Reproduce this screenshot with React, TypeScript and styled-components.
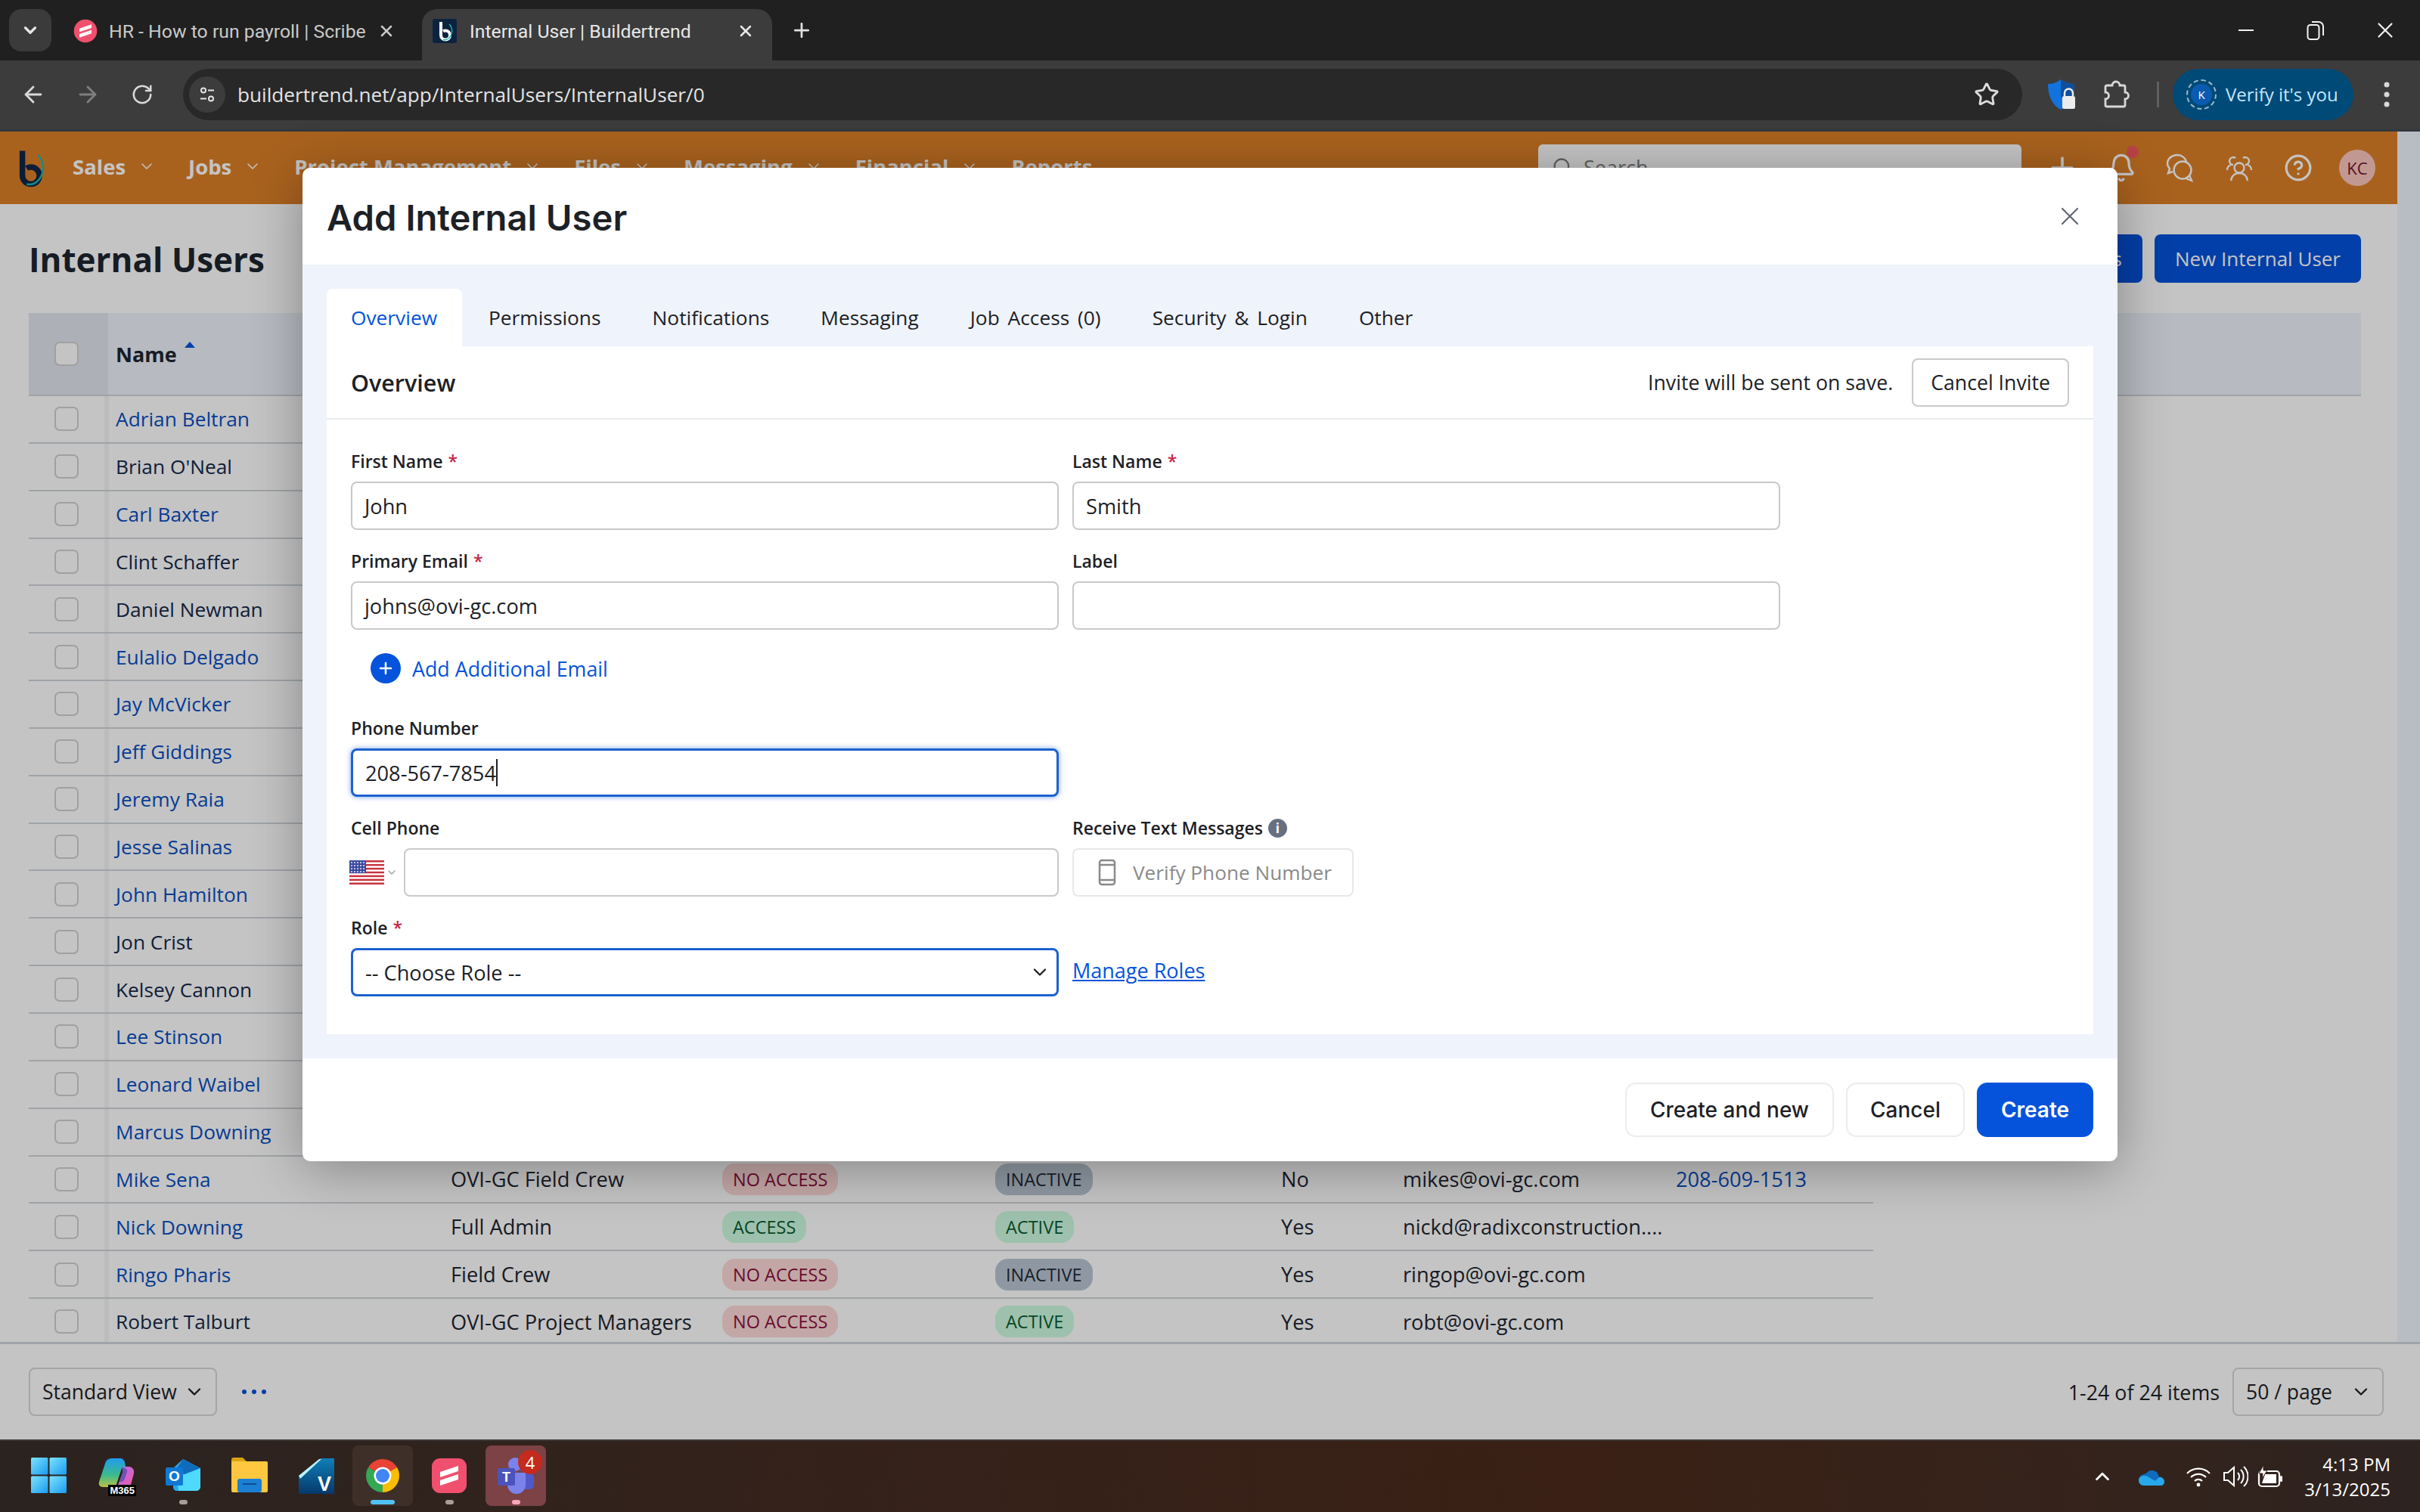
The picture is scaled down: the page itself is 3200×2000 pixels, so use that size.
import styled, { createGlobalStyle } from "styled-components";
import {
  ArrowLeft,
  ArrowRight,
  Bell,
  ChevronDown,
  ChevronUp,
  CircleHelp,
  Plus,
  RotateCw,
  Search,
  Star,
  X,
} from "lucide-react";

type UserRow = {
  name: string;
  plain?: boolean;
  role?: string;
  login?: "NO ACCESS" | "ACCESS";
  status?: "ACTIVE" | "INACTIVE";
  verified?: string;
  email?: string;
  phone?: string;
};

const users: UserRow[] = [
  { name: "Adrian Beltran" },
  { name: "Brian O'Neal", plain: true },
  { name: "Carl Baxter" },
  { name: "Clint Schaffer", plain: true },
  { name: "Daniel Newman", plain: true },
  { name: "Eulalio Delgado" },
  { name: "Jay McVicker" },
  { name: "Jeff Giddings" },
  { name: "Jeremy Raia" },
  { name: "Jesse Salinas" },
  { name: "John Hamilton" },
  { name: "Jon Crist", plain: true },
  { name: "Kelsey Cannon", plain: true },
  { name: "Lee Stinson" },
  { name: "Leonard Waibel" },
  { name: "Marcus Downing" },
  {
    name: "Mike Sena",
    role: "OVI-GC Field Crew",
    login: "NO ACCESS",
    status: "INACTIVE",
    verified: "No",
    email: "mikes@ovi-gc.com",
    phone: "208-609-1513",
  },
  {
    name: "Nick Downing",
    role: "Full Admin",
    login: "ACCESS",
    status: "ACTIVE",
    verified: "Yes",
    email: "nickd@radixconstruction....",
  },
  {
    name: "Ringo Pharis",
    role: "Field Crew",
    login: "NO ACCESS",
    status: "INACTIVE",
    verified: "Yes",
    email: "ringop@ovi-gc.com",
  },
  {
    name: "Robert Talburt",
    plain: true,
    role: "OVI-GC Project Managers",
    login: "NO ACCESS",
    status: "ACTIVE",
    verified: "Yes",
    email: "robt@ovi-gc.com",
  },
];

const navItems = ["Sales", "Jobs", "Project Management", "Files", "Messaging", "Financial"];
const modalTabs = ["Overview", "Permissions", "Notifications", "Messaging", "Job Access (0)", "Security & Login", "Other"];

const badgeColors: Record<string, { bg: string; fg: string }> = {
  "NO ACCESS": { bg: "#fedad8", fg: "#8a0f3c" },
  ACCESS: { bg: "#cdfbe0", fg: "#0a5a33" },
  INACTIVE: { bg: "#bac6d3", fg: "#1f2a38" },
  ACTIVE: { bg: "#cdfbe0", fg: "#0a5a33" },
};

const GlobalStyle = createGlobalStyle`
  html, body {
    margin: 0;
    padding: 0;
    background: #202020;
  }
  * {
    box-sizing: border-box;
  }
  svg {
    flex: none;
  }
`;

const Screen = styled.div`
  width: 3200px;
  height: 2000px;
  display: flex;
  flex-direction: column;
  overflow: hidden;
  font-family: "Open Sans", "Liberation Sans", sans-serif;
  color: #1d2126;
`;

/* browser chrome */
const TabStrip = styled.div`
  height: 80px;
  flex: none;
  display: flex;
  align-items: flex-start;
  padding: 12px 0 0 12px;
  background: #202020;
`;

const TabSearch = styled.div`
  width: 56px;
  height: 56px;
  border-radius: 16px;
  background: #3b3b3b;
  color: #e6e6e6;
  display: flex;
  align-items: center;
  justify-content: center;
`;

const BrowserTab = styled.div<{ $active?: boolean }>`
  position: relative;
  width: ${(p) => (p.$active ? "463px" : "490px")};
  height: 68px;
  display: flex;
  align-items: center;
  gap: ${(p) => (p.$active ? "17px" : "15px")};
  padding: 0 ${(p) => (p.$active ? "23px" : "35px")} 10px ${(p) => (p.$active ? "14px" : "29px")};
  border-radius: 20px 20px 0 0;
  background: ${(p) => (p.$active ? "#3c3c3c" : "transparent")};
  color: ${(p) => (p.$active ? "#e8e8e8" : "#c9c9c9")};
  font-family: Roboto, "Open Sans", sans-serif;
  font-size: 24.8px;
  white-space: nowrap;
`;

const TabTitle = styled.span`
  flex: 1;
`;

const NewTab = styled.div`
  margin-left: 24px;
  height: 56px;
  display: flex;
  align-items: center;
  color: #e0e0e0;
`;

const WindowControls = styled.div`
  margin: -12px 0 0 auto;
  display: flex;
  color: #f2f2f2;
`;

const WindowButton = styled.div`
  width: 92px;
  height: 80px;
  display: flex;
  align-items: center;
  justify-content: center;
`;

const Toolbar = styled.div`
  height: 94px;
  flex: none;
  display: flex;
  align-items: center;
  padding: 0 8px 2px 8px;
  background: #3c3c3c;
  border-bottom: 3px solid #33383c;
  color: #dcdcdc;
`;

const ToolButton = styled.div<{ $dim?: boolean }>`
  width: 72px;
  height: 68px;
  display: flex;
  align-items: center;
  justify-content: center;
  color: ${(p) => (p.$dim ? "#7f7f7f" : "#d8d8d8")};
`;

const Omnibox = styled.div`
  flex: 1;
  height: 68px;
  margin: 0 17px 0 18px;
  display: flex;
  align-items: center;
  padding: 0 30px 0 8px;
  border-radius: 34px;
  background: #282828;
`;

const SiteInfo = styled.div`
  width: 48px;
  height: 48px;
  border-radius: 50%;
  background: #3c3c3c;
  display: flex;
  align-items: center;
  justify-content: center;
`;

const UrlText = styled.span`
  flex: 1;
  margin-left: 16px;
  font-size: 26.2px;
  color: #e3e3e3;
`;

const ToolDivider = styled.div`
  width: 3px;
  height: 34px;
  margin: 0 18px 0 17px;
  background: #5f5f5f;
`;

const VerifyPill = styled.div`
  width: 239px;
  height: 68px;
  display: flex;
  align-items: center;
  gap: 12px;
  padding-left: 18px;
  border-radius: 34px;
  background: #004a77;
  color: #c2e7ff;
  font-size: 24px;
  white-space: nowrap;
`;

const VerifyAvatar = styled.div`
  width: 40px;
  height: 40px;
  flex: none;
  display: flex;
  align-items: center;
  justify-content: center;
  padding: 4px;
  border-radius: 50%;
  border: 2px dashed #9db9cc;
  background: #0a5bb0 content-box;
  font-size: 15px;
  color: #fff;
`;

const MenuButton = styled(ToolButton)`
  margin-left: 8px;
`;

/* buildertrend page, dimmed by the modal backdrop */
const Page = styled.div`
  position: relative;
  flex: 1;
  min-height: 0;
  display: flex;
  flex-direction: column;
  background: #fff;
`;

const PageTop = styled.div`
  flex: 1;
  min-height: 0;
  display: flex;
`;

const PageColumn = styled.div`
  flex: 1;
  min-width: 0;
  display: flex;
  flex-direction: column;
`;

const ScrollRail = styled.div`
  width: 30px;
  flex: none;
  background: #f0f5fe;
`;

const Nav = styled.nav`
  height: 96px;
  flex: none;
  display: flex;
  align-items: center;
  padding: 0 14px 0 9px;
  background: #dc8028;
`;

const NavLinks = styled.div`
  display: flex;
  align-items: center;
  gap: 43px;
  margin-left: 27px;
`;

const NavLink = styled.div`
  display: flex;
  align-items: center;
  gap: 16px;
  margin-top: -4px;
  color: #fff;
  font-size: 27.5px;
  font-weight: 700;
  white-space: nowrap;
`;

const NavSearch = styled.div`
  margin: -2px 0 0 auto;
  width: 639px;
  height: 60px;
  display: flex;
  align-items: center;
  gap: 14px;
  padding-left: 18px;
  border-radius: 6px;
  background: #fff;
  color: #7d7d7d;
  font-size: 27px;
`;

const NavIcons = styled.div`
  display: flex;
  align-items: center;
  margin-left: 15px;
  color: #fff;
`;

const NavIcon = styled.div`
  position: relative;
  width: 78px;
  height: 60px;
  display: flex;
  align-items: center;
  justify-content: center;
`;

const BellDot = styled.span`
  position: absolute;
  top: 1px;
  right: 16px;
  width: 16px;
  height: 16px;
  border-radius: 50%;
  background: #f0565b;
`;

const Avatar = styled.div`
  width: 48px;
  height: 48px;
  border-radius: 50%;
  display: flex;
  align-items: center;
  justify-content: center;
  background: #fdc7bf;
  color: #6f1530;
  font-size: 22px;
`;

const Main = styled.main`
  flex: 1;
  min-height: 0;
  display: flex;
  flex-direction: column;
  padding: 0 48px 0 38px;
  overflow: hidden;
`;

const TitleRow = styled.div`
  height: 144px;
  flex: none;
  display: flex;
  align-items: center;
  justify-content: space-between;
`;

const PageTitle = styled.h1`
  margin: 2px 0 0;
  font-size: 44px;
  font-weight: 700;
  color: #1d2530;
`;

const TitleActions = styled.div`
  display: flex;
  gap: 16px;
`;

const PrimaryAction = styled.div`
  height: 64px;
  display: flex;
  align-items: center;
  padding: 0 27px;
  border-radius: 8px;
  background: #0553db;
  color: #fff;
  font-size: 26px;
`;

const TableHead = styled.div`
  height: 110px;
  flex: none;
  display: flex;
  background: #eff4fc;
  border-bottom: 2px solid #d0d5db;
`;

const HeadCheckCell = styled.div`
  width: 105px;
  display: flex;
  align-items: center;
  justify-content: center;
  padding-right: 5px;
  background: #e1e6ee;
`;

const HeadName = styled.div`
  display: flex;
  align-items: center;
  gap: 8px;
  padding-left: 10px;
  font-size: 27px;
  font-weight: 700;
  color: #1d2530;
`;

const SortUp = styled.span`
  width: 0;
  height: 0;
  margin: -24px 0 0 2px;
  border-left: 7px solid transparent;
  border-right: 7px solid transparent;
  border-bottom: 8px solid #0553db;
`;

const Row = styled.div`
  width: 2439px;
  height: 62.85px;
  flex: none;
  display: grid;
  grid-template-columns: 105px 443px 359px 361px 378px 161px 361px 271px;
  align-items: center;
  border-bottom: 2px solid #cfd4da;
`;

const CheckCell = styled.div`
  height: 100%;
  display: flex;
  align-items: center;
  justify-content: center;
  margin-right: -1px;
  border-right: 6px solid #f5f5f5;
`;

const Checkbox = styled.span`
  display: block;
  width: 32px;
  height: 32px;
  border: 2px solid #d0d0d0;
  border-radius: 7px;
  background: #fff;
`;

const Cell = styled.div<{ $link?: boolean }>`
  padding-left: 10px;
  font-size: 27.2px;
  white-space: nowrap;
  color: ${(p) => (p.$link ? "#0a4ec0" : "#1d2530")};
`;

const NameCell = styled.div<{ $link?: boolean }>`
  padding-left: 10px;
  font-size: 26.3px;
  white-space: nowrap;
  color: ${(p) => (p.$link ? "#0a4ec0" : "#15294a")};
`;

const Badge = styled.span<{ $kind: string }>`
  display: inline-flex;
  align-items: center;
  height: 42px;
  padding: 0 14px;
  border-radius: 17px;
  font-size: 23.5px;
  font-weight: 500;
  background: ${(p) => badgeColors[p.$kind].bg};
  color: ${(p) => badgeColors[p.$kind].fg};
`;

const Footer = styled.footer`
  height: 129px;
  flex: none;
  display: flex;
  align-items: center;
  justify-content: space-between;
  padding: 0 48px 0 38px;
  border-top: 3px solid #d0d5db;
`;

const FooterGroup = styled.div`
  display: flex;
  align-items: center;
`;

const PagerSelect = styled.div<{ $width: number }>`
  width: ${(p) => p.$width}px;
  height: 64px;
  display: flex;
  align-items: center;
  justify-content: space-between;
  padding: 0 14px 0 16px;
  border: 2px solid #d7d7d7;
  border-radius: 8px;
  font-size: 26.5px;
`;

const MoreDots = styled.div`
  display: flex;
  gap: 7px;
  margin-left: 33px;
  > span {
    width: 6px;
    height: 6px;
    border-radius: 50%;
    background: #0553db;
  }
`;

const ItemCount = styled.span`
  margin-right: 17px;
  font-size: 26.8px;
`;

const Backdrop = styled.div`
  position: absolute;
  inset: 0;
  background: rgba(0, 0, 0, 0.23);
`;

/* modal */
const Modal = styled.div`
  position: absolute;
  left: 400px;
  top: 48px;
  width: 2400px;
  height: 1314px;
  display: flex;
  flex-direction: column;
  border-radius: 10px;
  background: #fff;
  box-shadow: 0 10px 70px rgba(0, 0, 0, 0.32);
`;

const ModalHeader = styled.div`
  height: 128px;
  flex: none;
  display: flex;
  align-items: center;
  justify-content: space-between;
  padding: 0 43px 0 32px;
  color: #5f6672;
`;

const ModalTitle = styled.h2`
  margin: 2px 0 0;
  font-family: Inter, "Open Sans", sans-serif;
  font-size: 47.2px;
  font-weight: 600;
  color: #1d2126;
`;

const ModalBody = styled.div`
  flex: 1;
  min-height: 0;
  display: flex;
  flex-direction: column;
  padding: 32px;
  background: #eff3fb;
`;

const TabBar = styled.div`
  height: 76px;
  flex: none;
  display: flex;
`;

const ModalTab = styled.div<{ $active?: boolean }>`
  display: flex;
  align-items: center;
  padding: 0 33px 0 ${(p) => (p.$active ? "32px" : "35px")};
  border-radius: 8px 8px 0 0;
  font-size: 26.3px;
  word-spacing: 4px;
  white-space: nowrap;
  background: ${(p) => (p.$active ? "#fff" : "transparent")};
  color: ${(p) => (p.$active ? "#0553db" : "#1d2126")};
`;

const Panel = styled.div`
  flex: 1;
  min-height: 0;
  background: #fff;
`;

const PanelHeader = styled.div`
  height: 97px;
  display: flex;
  align-items: center;
  justify-content: space-between;
  padding: 0 32px;
  border-bottom: 2px solid #e8ebef;
`;

const PanelTitle = styled.h3`
  margin: 0;
  font-size: 30.5px;
  font-weight: 600;
`;

const PanelActions = styled.div`
  display: flex;
  align-items: center;
  gap: 25px;
  font-size: 26.7px;
`;

const OutlineButton = styled.div`
  height: 64px;
  display: flex;
  align-items: center;
  padding: 0 23px;
  border: 2px solid #c9c9c9;
  border-radius: 8px;
`;

const Form = styled.div`
  display: flex;
  flex-direction: column;
  gap: 26px;
  padding: 40px 32px 0;
`;

const FormRow = styled.div`
  display: flex;
  align-items: flex-start;
  gap: 18px;
`;

const Field = styled.div<{ $width?: number }>`
  width: ${(p) => p.$width ?? 936}px;
  flex: none;
`;

const Label = styled.div`
  height: 30px;
  margin-bottom: 12px;
  display: flex;
  align-items: center;
  gap: 7px;
  font-size: 23px;
  font-weight: 600;
  white-space: nowrap;
`;

const Required = styled.span`
  color: #c4284a;
`;

const InputBox = styled.div<{ $focus?: "strong" | "plain" }>`
  flex: 1;
  height: 64px;
  display: flex;
  align-items: center;
  justify-content: space-between;
  padding: 0 8px 0 16px;
  border-radius: 8px;
  font-size: 27.2px;
  background: #fff;
  border: ${(p) => (p.$focus ? "3px solid #1d62cf" : "2px solid #c9c9c9")};
  box-shadow: ${(p) => (p.$focus === "strong" ? "0 0 7px rgba(5, 83, 219, 0.55)" : "none")};
`;

const Caret = styled.span`
  flex: none;
  width: 2px;
  height: 36px;
  margin-right: auto;
  background: #1d2126;
`;

const AddEmail = styled.div`
  height: 40px;
  margin: 5px 0 18px 26px;
  display: flex;
  align-items: center;
  gap: 15px;
  color: #0553db;
  font-size: 26.8px;
`;

const AddCircle = styled.span`
  width: 40px;
  height: 40px;
  border-radius: 50%;
  display: flex;
  align-items: center;
  justify-content: center;
  background: #0553db;
  color: #fff;
`;

const PhoneRow = styled.div`
  display: flex;
  align-items: center;
`;

const FlagPicker = styled.div`
  width: 72px;
  flex: none;
  display: flex;
  align-items: center;
  gap: 2px;
  margin-left: -2px;
  color: #a0a0a0;
`;

const InfoDot = styled.span`
  width: 25px;
  height: 25px;
  border-radius: 50%;
  display: flex;
  align-items: center;
  justify-content: center;
  background: #667080;
  color: #fff;
  font-size: 17px;
  font-weight: 700;
`;

const VerifyButton = styled.div`
  height: 64px;
  display: flex;
  align-items: center;
  gap: 22px;
  padding-left: 32px;
  border: 2px solid #e8e8e8;
  border-radius: 8px;
  color: #8a8a8a;
  font-size: 26.2px;
  white-space: nowrap;
`;

const ManageLink = styled.a`
  margin-bottom: 16px;
  font-size: 27px;
  color: #0553db;
  text-decoration: underline;
`;

const RoleRow = styled(FormRow)`
  align-items: flex-end;
`;

const ModalFooter = styled.div`
  height: 136px;
  flex: none;
  display: flex;
  align-items: center;
  justify-content: flex-end;
  gap: 16px;
  padding: 0 32px;
`;

const FooterButton = styled.div<{ $width: number; $primary?: boolean }>`
  width: ${(p) => p.$width}px;
  height: 72px;
  display: flex;
  align-items: center;
  justify-content: center;
  border-radius: 14px;
  font-family: Inter, "Open Sans", sans-serif;
  font-size: 28px;
  font-weight: ${(p) => (p.$primary ? 600 : 500)};
  background: ${(p) => (p.$primary ? "#0553db" : "#fff")};
  color: ${(p) => (p.$primary ? "#fff" : "#1d2126")};
  border: 2px solid ${(p) => (p.$primary ? "#0553db" : "#ececec")};
`;

/* windows taskbar */
const Taskbar = styled.div`
  height: 96px;
  flex: none;
  display: flex;
  padding-left: 20px;
  border-top: 2px solid #3d3836;
  background: linear-gradient(90deg, #2b2320 0%, #33221b 30%, #3a2015 65%, #35231b 85%, #2d2320 100%);
  color: #fff;
`;

const TaskItem = styled.div<{ $tone?: "chrome" | "teams" }>`
  position: relative;
  width: 80px;
  height: 80px;
  margin: 6px 4px 0;
  display: flex;
  flex-direction: column;
  align-items: center;
  padding-top: 16px;
  border-radius: 8px;
  background: ${(p) => (p.$tone === "chrome" ? "#3e2f29" : p.$tone === "teams" ? "#7c4245" : "transparent")};

  &:first-child {
    margin-right: 6px;
  }
`;

const RunDot = styled.span<{ $color: string; $wide?: boolean }>`
  width: ${(p) => (p.$wide ? "32px" : "11px")};
  height: 6px;
  margin-top: 8px;
  border-radius: 3px;
  background: ${(p) => p.$color};
`;

const TaskBadge = styled.span`
  position: absolute;
  top: 6px;
  right: 5px;
  width: 32px;
  height: 32px;
  border-radius: 50%;
  display: flex;
  align-items: center;
  justify-content: center;
  background: #c42b1c;
  font-size: 22px;
`;

const M365Tag = styled.span`
  position: absolute;
  top: 52px;
  right: 14px;
  padding: 0 2px;
  line-height: 15px;
  background: #000;
  color: #fff;
  font-family: "Liberation Sans", sans-serif;
  font-size: 13px;
  font-weight: 700;
`;

const Tray = styled.div`
  margin-left: auto;
  display: flex;
  align-items: center;
  padding-right: 39px;
`;

const TrayIcon = styled.div<{ $width: number }>`
  width: ${(p) => p.$width}px;
  display: flex;
  justify-content: center;
`;

const Clock = styled.div`
  margin-left: 24px;
  text-align: right;
  font-size: 24px;
  line-height: 33px;
`;

const ScribeIcon = ({ size = 48 }: { size?: number }) => (
  <svg width={size} height={size} viewBox="0 0 48 48">
    <rect x="1" y="1" width="46" height="46" rx={size < 40 ? 23 : 11} fill="#f0506e" />
    <path d="M12 19 36 11v7l-24 8zM12 30l24-8v7l-24 8z" fill="#fff" />
  </svg>
);

const BuilderLogo = ({ size, tile }: { size: number; tile?: boolean }) => (
  <svg width={size} height={size} viewBox="0 0 32 32">
    {tile && <rect width="32" height="32" rx="3" fill="#0c2340" />}
    <path
      d="M11 4v17.5a6 6 0 1 0 6-6c-1.2 0-2.2.3-3 .8"
      fill="none"
      stroke={tile ? "#fff" : "#10264a"}
      strokeWidth="4"
    />
    <path d="M22 7c5 5 5 14-1 19-2 1.500-5 2-7 1.500" fill="none" stroke="#1fb5a8" strokeWidth="1.400" />
  </svg>
);

const SiteTune = () => (
  <svg width="24" height="24" viewBox="0 0 24 24" fill="none" stroke="#e3e3e3" strokeWidth="2">
    <circle cx="7" cy="6.500" r="3" />
    <path d="M13 6.500h8M3 17.500h8" />
    <circle cx="17" cy="17.500" r="3" />
  </svg>
);

const ShieldLock = () => (
  <svg width="44" height="44" viewBox="0 0 44 44">
    <path d="M3 8c7 0 12-2 17-6 5 4 11 6 18 6 0 14-3 27-18 34C8 36 3 22 3 8z" fill="#1273de" />
    <path d="M20 2c5 4 11 6 18 6 0 7-1 13-3 18H20z" fill="#0e4f9e" />
    <rect x="22" y="24" width="17" height="17" rx="2.500" fill="#ececec" />
    <path d="M25 24v-4a5.500 5.500 0 0 1 11 0v4" fill="none" stroke="#ececec" strokeWidth="2.500" />
  </svg>
);

const ExtensionIcon = () => (
  <svg width="34" height="40" viewBox="0 0 34 40" fill="none" stroke="currentColor" strokeWidth="2.800">
    <path d="M4 8h7a5 5 0 0 1 10 0h5a2 2 0 0 1 2 2v7a4.500 4.500 0 0 1 0 9v8a2 2 0 0 1-2 2H4a2 2 0 0 1-2-2v-8a4.500 4.500 0 0 0 0-9v-7a2 2 0 0 1 2-2z" />
  </svg>
);

const ChatIcon = () => (
  <svg width="40" height="40" viewBox="0 0 40 40" fill="none" stroke="currentColor" strokeWidth="2.400">
    <path d="M10 25l-6 2 2-6C4 19 3 17 3 14 3 8 9 3 16 3c6 0 11 4 12 9" />
    <circle cx="23" cy="23" r="11.500" />
    <path d="M32 30l3 7-8-3" />
  </svg>
);

const PeopleIcon = () => (
  <svg width="42" height="40" viewBox="0 0 42 40" fill="none" stroke="currentColor" strokeWidth="2.300">
    <circle cx="21" cy="20" r="6.500" />
    <path d="M10 37c1-7 5-10 11-10s10 3 11 10" />
    <path d="M13 16a5 5 0 1 1 3-9M5 23c0-4 2-6 5-7" />
    <path d="M29 16a5 5 0 1 0-3-9M37 23c0-4-2-6-5-7" />
  </svg>
);

const RestoreIcon = () => (
  <svg width="24" height="28" viewBox="0 0 24 28" fill="none" stroke="currentColor" strokeWidth="2">
    <rect x="1.500" y="7" width="15" height="19" rx="3.500" />
    <path d="M7 3h9a6 6 0 0 1 6 6v12" />
  </svg>
);

const PhoneGlyph = () => (
  <svg width="24" height="36" viewBox="0 0 24 36" fill="none" stroke="#8a8a8a" strokeWidth="2.500">
    <rect x="2" y="2" width="20" height="32" rx="3" />
    <path d="M2 8h20M2 28h20" />
  </svg>
);

const UsFlag = () => (
  <svg width="46" height="32" viewBox="0 0 46 32">
    <rect width="46" height="32" fill="#fff" />
    {[0, 1, 2, 3, 4, 5, 6].map((i) => (
      <rect key={i} y={i * 4.92} width="46" height="2.460" fill="#c8313e" />
    ))}
    <rect width="22" height="17" fill="#3c4a9e" />
    {[3, 7, 11, 15, 19].map((x) =>
      [3, 7, 11, 15].map((y) => <circle key={`${x}-${y}`} cx={x} cy={y} r="0.900" fill="#fff" />)
    )}
  </svg>
);

const WindowsLogo = () => (
  <svg width="47" height="47" viewBox="0 0 47 47">
    <defs>
      <linearGradient id="winA" x1="0" y1="0" x2="1" y2="1">
        <stop offset="0" stopColor="#7de3fd" />
        <stop offset="1" stopColor="#1a9bf0" />
      </linearGradient>
    </defs>
    <rect width="22.500" height="22.500" rx="1.500" fill="url(#winA)" />
    <rect x="24.500" width="22.500" height="22.500" rx="1.500" fill="url(#winA)" />
    <rect y="24.500" width="22.500" height="22.500" rx="1.500" fill="url(#winA)" />
    <rect x="24.500" y="24.500" width="22.500" height="22.500" rx="1.500" fill="url(#winA)" />
  </svg>
);

const CopilotLogo = () => (
  <svg width="48" height="47" viewBox="0 0 48 47">
    <defs>
      <linearGradient id="copA" x1="0" y1="0" x2="0" y2="1">
        <stop offset="0" stopColor="#1f9cf0" />
        <stop offset="0.500" stopColor="#3dbb8a" />
        <stop offset="1" stopColor="#f3c327" />
      </linearGradient>
      <linearGradient id="copB" x1="0" y1="0" x2="1" y2="1">
        <stop offset="0" stopColor="#b06ef5" />
        <stop offset="1" stopColor="#f05a9c" />
      </linearGradient>
    </defs>
    <path d="M30 12h10c5 0 8 4 7 9l-4 15c-1 4-4 6-8 6H24l8-22c1-4 0-6-2-8z" fill="url(#copB)" />
    <path d="M18 1h11c3 0 5 2 6 5l1 6c-3 0-5 2-6 5l-8 24c-1 3-2 5-5 5-2 0-4-2-4-4v-3H6c-4 0-6-3-5-7L9 8c1-4 4-7 9-7z" fill="url(#copA)" />
    <path d="M30 13c2 2 3 4 2 7l-4 12c3 1 6-1 7-4l3-9c1-3-2-6-8-6z" fill="#2c3f9e" opacity="0.550" />
  </svg>
);

const OutlookLogo = () => (
  <svg width="48" height="48" viewBox="0 0 48 48">
    <path d="M24 2 47 14v24c0 4-3 6-6 6H16c-3 0-5-2-5-5V14z" fill="#28a8ea" />
    <path d="M24 2 47 14 30 26 16 14z" fill="#0f6cbd" />
    <path d="M16 26 47 14v24c0 4-3 6-6 6H18z" fill="#50d9ff" />
    <rect x="1" y="13" width="23" height="24" rx="2" fill="#0f78d4" />
    <text x="12.500" y="31" textAnchor="middle" fontSize="19" fontWeight="700" fontFamily="Liberation Sans" fill="#fff">
      O
    </text>
  </svg>
);

const FolderLogo = () => (
  <svg width="48" height="46" viewBox="0 0 48 46">
    <path d="M0 3c0-2 1-3 3-3h12l6 6h27v8H0z" fill="#d9a40e" />
    <rect y="5" width="48" height="41" rx="2" fill="#fdc83f" />
    <rect x="8" y="28" width="32" height="18" rx="3" fill="#1b80d4" />
    <rect x="15" y="34" width="18" height="2" fill="#0e4f8f" />
  </svg>
);

const VLogo = () => (
  <svg width="48" height="48" viewBox="0 0 48 48">
    <defs>
      <linearGradient id="vA" x1="0" y1="0" x2="0" y2="1">
        <stop offset="0" stopColor="#0f7fb8" />
        <stop offset="1" stopColor="#06386b" />
      </linearGradient>
    </defs>
    <path d="M30 1h18v47H1V24z" fill="url(#vA)" />
    <path d="M1 24 28 2h3L3 28z" fill="#bdf1ff" />
    <text x="35" y="44" textAnchor="middle" fontSize="27" fontWeight="700" fontFamily="Liberation Sans" fill="#fff">
      V
    </text>
  </svg>
);

const ChromeLogo = () => (
  <svg width="48" height="48" viewBox="0 0 48 48">
    <path d="M24 24 43 13A22 22 0 0 0 5 13Z" fill="#ea4335" />
    <path d="M24 24 43 13A22 22 0 0 1 24 46Z" fill="#fbbc04" />
    <path d="M24 24 24 46A22 22 0 0 1 5 13Z" fill="#34a853" />
    <circle cx="24" cy="24" r="11.500" fill="#fff" />
    <circle cx="24" cy="24" r="9" fill="#4285f4" />
  </svg>
);

const TeamsLogo = () => (
  <svg width="50" height="48" viewBox="0 0 50 48">
    <circle cx="36" cy="11" r="8" fill="#5059c9" />
    <rect x="25" y="20" width="24" height="22" rx="6" fill="#5059c9" />
    <circle cx="24" cy="9" r="9" fill="#7b83eb" />
    <path d="M12 20h26v16a12 12 0 0 1-24 0z" fill="#7b83eb" />
    <rect x="1" y="14" width="23" height="23" rx="2" fill="#4b53bc" />
    <text x="12.500" y="32" textAnchor="middle" fontSize="18" fontWeight="700" fontFamily="Liberation Sans" fill="#fff">
      T
    </text>
  </svg>
);

const OneDriveLogo = () => (
  <svg width="34" height="24" viewBox="0 0 34 24">
    <path d="M10 8a9 9 0 0 1 16 2l4 12-24 2H7C2 24 0 20 0 17c0-5 4-8 10-9z" fill="#0f6cbd" />
    <path d="M7 24c-4 0-7-3-7-7 0-3 3-6 7-6 3 0 6 1 8 3l7 4 5-5c3-1 7 2 7 6 0 3-2 5-5 5z" fill="#28a8ea" />
  </svg>
);

const WifiIcon = () => (
  <svg width="34" height="30" viewBox="0 0 34 30" fill="none" stroke="#fff" strokeWidth="2.200">
    <path d="M2 11a21 21 0 0 1 30 0M7 16a14 14 0 0 1 20 0M12 21a7 7 0 0 1 10 0" />
    <circle cx="17" cy="26" r="2.400" fill="#fff" stroke="none" />
  </svg>
);

const VolumeIcon = () => (
  <svg width="34" height="32" viewBox="0 0 34 32" fill="none" stroke="#fff" strokeWidth="2">
    <path d="M2 11h5l8-7v24l-8-7H2z" />
    <path d="M20 11a7 7 0 0 1 0 10M24 7a13 13 0 0 1 0 18M28 3a18 18 0 0 1 0 26" />
  </svg>
);

const BatteryIcon = () => (
  <svg width="34" height="32" viewBox="0 0 34 32">
    <rect x="2" y="9" width="27" height="20" rx="4" fill="none" stroke="#fff" strokeWidth="2.200" />
    <path d="M6 25 10 13h15v12z" fill="#fff" />
    <rect x="30" y="15" width="3" height="8" rx="1.500" fill="#fff" />
    <path d="M8 1 2 12h5l-1 7 7-11H8z" fill="#fff" stroke="#3a2015" strokeWidth="1" />
  </svg>
);

export default function App() {
  return (
    <Screen>
      <GlobalStyle />
      <TabStrip>
        <TabSearch>
          <ChevronDown size={26} strokeWidth={3} />
        </TabSearch>
        <BrowserTab>
          <ScribeIcon size={32} />
          <TabTitle>HR - How to run payroll | Scribe</TabTitle>
          <X size={24} strokeWidth={2.500} />
        </BrowserTab>
        <BrowserTab $active>
          <BuilderLogo size={32} tile />
          <TabTitle>Internal User | Buildertrend</TabTitle>
          <X size={24} strokeWidth={2.500} />
        </BrowserTab>
        <NewTab>
          <Plus size={30} strokeWidth={2.200} />
        </NewTab>
        <WindowControls>
          <WindowButton>
            <svg width="20" height="2" viewBox="0 0 20 2">
              <rect width="20" height="2" fill="currentColor" />
            </svg>
          </WindowButton>
          <WindowButton>
            <RestoreIcon />
          </WindowButton>
          <WindowButton>
            <X size={34} strokeWidth={1.500} />
          </WindowButton>
        </WindowControls>
      </TabStrip>

      <Toolbar>
        <ToolButton>
          <ArrowLeft size={34} strokeWidth={2} />
        </ToolButton>
        <ToolButton $dim>
          <ArrowRight size={34} strokeWidth={2} />
        </ToolButton>
        <ToolButton>
          <RotateCw size={30} strokeWidth={2} />
        </ToolButton>
        <Omnibox>
          <SiteInfo>
            <SiteTune />
          </SiteInfo>
          <UrlText>buildertrend.net/app/InternalUsers/InternalUser/0</UrlText>
          <Star size={34} strokeWidth={2} />
        </Omnibox>
        <ToolButton>
          <ShieldLock />
        </ToolButton>
        <ToolButton>
          <ExtensionIcon />
        </ToolButton>
        <ToolDivider />
        <VerifyPill>
          <VerifyAvatar>K</VerifyAvatar>
          Verify it's you
        </VerifyPill>
        <MenuButton>
          <svg width="8" height="34" viewBox="0 0 8 34" fill="currentColor">
            <circle cx="4" cy="4" r="3.500" />
            <circle cx="4" cy="17" r="3.500" />
            <circle cx="4" cy="30" r="3.500" />
          </svg>
        </MenuButton>
      </Toolbar>

      <Page>
        <PageTop>
          <PageColumn>
            <Nav>
              <BuilderLogo size={60} />
              <NavLinks>
                {navItems.map((item) => (
                  <NavLink key={item}>
                    {item}
                    <ChevronDown size={24} strokeWidth={1.500} />
                  </NavLink>
                ))}
                <NavLink>Reports</NavLink>
              </NavLinks>
              <NavSearch>
                <Search size={28} strokeWidth={2} />
                Search
              </NavSearch>
              <NavIcons>
                <NavIcon>
                  <Plus size={44} strokeWidth={2} />
                </NavIcon>
                <NavIcon>
                  <Bell size={40} strokeWidth={2} />
                  <BellDot />
                </NavIcon>
                <NavIcon>
                  <ChatIcon />
                </NavIcon>
                <NavIcon>
                  <PeopleIcon />
                </NavIcon>
                <NavIcon>
                  <CircleHelp size={38} strokeWidth={2} />
                </NavIcon>
                <NavIcon>
                  <Avatar>KC</Avatar>
                </NavIcon>
              </NavIcons>
            </Nav>
            <Main>
              <TitleRow>
                <PageTitle>Internal Users</PageTitle>
                <TitleActions>
                  <PrimaryAction>Actions</PrimaryAction>
                  <PrimaryAction>New Internal User</PrimaryAction>
                </TitleActions>
              </TitleRow>
              <TableHead>
                <HeadCheckCell>
                  <Checkbox />
                </HeadCheckCell>
                <HeadName>
                  Name
                  <SortUp />
                </HeadName>
              </TableHead>
              {users.map((user) => (
                <Row key={user.name}>
                  <CheckCell>
                    <Checkbox />
                  </CheckCell>
                  <NameCell $link={!user.plain}>{user.name}</NameCell>
                  <Cell>{user.role}</Cell>
                  <Cell>{user.login && <Badge $kind={user.login}>{user.login}</Badge>}</Cell>
                  <Cell>{user.status && <Badge $kind={user.status}>{user.status}</Badge>}</Cell>
                  <Cell>{user.verified}</Cell>
                  <Cell>{user.email}</Cell>
                  <Cell $link>{user.phone}</Cell>
                </Row>
              ))}
            </Main>
          </PageColumn>
          <ScrollRail />
        </PageTop>
        <Footer>
          <FooterGroup>
            <PagerSelect $width={249}>
              Standard View
              <ChevronDown size={28} strokeWidth={2} />
            </PagerSelect>
            <MoreDots>
              <span />
              <span />
              <span />
            </MoreDots>
          </FooterGroup>
          <FooterGroup>
            <ItemCount>1-24 of 24 items</ItemCount>
            <PagerSelect $width={200}>
              50 / page
              <ChevronDown size={28} strokeWidth={2} />
            </PagerSelect>
          </FooterGroup>
        </Footer>

        <Backdrop>
          <Modal>
            <ModalHeader>
              <ModalTitle>Add Internal User</ModalTitle>
              <X size={40} strokeWidth={1.300} />
            </ModalHeader>
            <ModalBody>
              <TabBar>
                {modalTabs.map((tab, i) => (
                  <ModalTab key={tab} $active={i === 0}>
                    {tab}
                  </ModalTab>
                ))}
              </TabBar>
              <Panel>
                <PanelHeader>
                  <PanelTitle>Overview</PanelTitle>
                  <PanelActions>
                    Invite will be sent on save.
                    <OutlineButton>Cancel Invite</OutlineButton>
                  </PanelActions>
                </PanelHeader>
                <Form>
                  <FormRow>
                    <Field>
                      <Label>
                        First Name <Required>*</Required>
                      </Label>
                      <InputBox>John</InputBox>
                    </Field>
                    <Field>
                      <Label>
                        Last Name <Required>*</Required>
                      </Label>
                      <InputBox>Smith</InputBox>
                    </Field>
                  </FormRow>
                  <FormRow>
                    <Field>
                      <Label>
                        Primary Email <Required>*</Required>
                      </Label>
                      <InputBox>johns@ovi-gc.com</InputBox>
                    </Field>
                    <Field>
                      <Label>Label</Label>
                      <InputBox />
                    </Field>
                  </FormRow>
                  <AddEmail>
                    <AddCircle>
                      <Plus size={24} strokeWidth={2.500} />
                    </AddCircle>
                    Add Additional Email
                  </AddEmail>
                  <Field>
                    <Label>Phone Number</Label>
                    <InputBox $focus="strong">
                      208-567-7854
                      <Caret />
                    </InputBox>
                  </Field>
                  <FormRow>
                    <Field>
                      <Label>Cell Phone</Label>
                      <PhoneRow>
                        <FlagPicker>
                          <UsFlag />
                          <ChevronDown size={16} strokeWidth={2} />
                        </FlagPicker>
                        <InputBox />
                      </PhoneRow>
                    </Field>
                    <Field $width={372}>
                      <Label>
                        Receive Text Messages <InfoDot>i</InfoDot>
                      </Label>
                      <VerifyButton>
                        <PhoneGlyph />
                        Verify Phone Number
                      </VerifyButton>
                    </Field>
                  </FormRow>
                  <RoleRow>
                    <Field>
                      <Label>
                        Role <Required>*</Required>
                      </Label>
                      <InputBox $focus="plain">
                        -- Choose Role --
                        <ChevronDown size={28} strokeWidth={2} />
                      </InputBox>
                    </Field>
                    <ManageLink>Manage Roles</ManageLink>
                  </RoleRow>
                </Form>
              </Panel>
            </ModalBody>
            <ModalFooter>
              <FooterButton $width={276}>Create and new</FooterButton>
              <FooterButton $width={157}>Cancel</FooterButton>
              <FooterButton $width={154} $primary>
                Create
              </FooterButton>
            </ModalFooter>
          </Modal>
        </Backdrop>
      </Page>

      <Taskbar>
        <TaskItem>
          <WindowsLogo />
        </TaskItem>
        <TaskItem>
          <CopilotLogo />
          <M365Tag>M365</M365Tag>
        </TaskItem>
        <TaskItem>
          <OutlookLogo />
          <RunDot $color="#a89d99" />
        </TaskItem>
        <TaskItem>
          <FolderLogo />
        </TaskItem>
        <TaskItem>
          <VLogo />
        </TaskItem>
        <TaskItem $tone="chrome">
          <ChromeLogo />
          <RunDot $color="#4fc3f7" $wide />
        </TaskItem>
        <TaskItem>
          <ScribeIcon />
          <RunDot $color="#a89d99" />
        </TaskItem>
        <TaskItem $tone="teams">
          <TeamsLogo />
          <RunDot $color="#f7a8b8" />
          <TaskBadge>4</TaskBadge>
        </TaskItem>
        <Tray>
          <TrayIcon $width={56}>
            <ChevronUp size={30} strokeWidth={2.200} />
          </TrayIcon>
          <TrayIcon $width={74}>
            <OneDriveLogo />
          </TrayIcon>
          <TrayIcon $width={49}>
            <WifiIcon />
          </TrayIcon>
          <TrayIcon $width={49}>
            <VolumeIcon />
          </TrayIcon>
          <TrayIcon $width={43}>
            <BatteryIcon />
          </TrayIcon>
          <Clock>
            4:13 PM
            <br />
            3/13/2025
          </Clock>
        </Tray>
      </Taskbar>
    </Screen>
  );
}
